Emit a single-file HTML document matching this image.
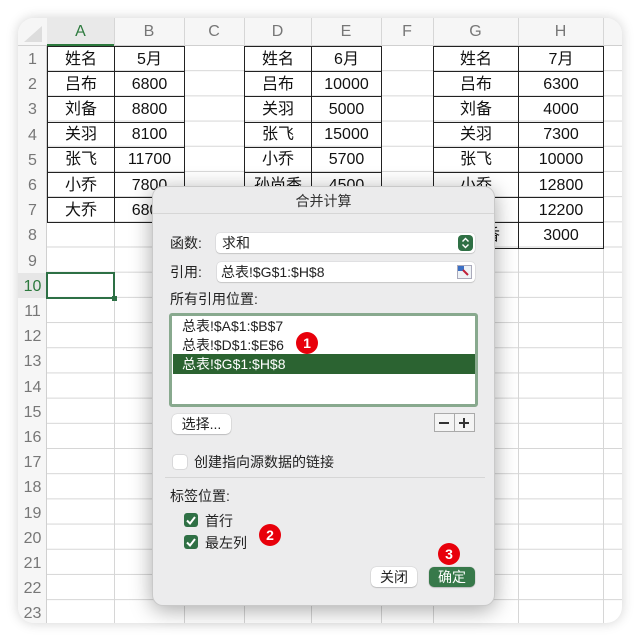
<!DOCTYPE html>
<html><head><meta charset="utf-8"><style>
*{margin:0;padding:0;box-sizing:border-box}
body{width:640px;height:642px;background:#fff;position:relative;overflow:hidden;font-family:"Liberation Sans","Noto Sans CJK SC",sans-serif}
.win{position:absolute;left:18px;top:18px;width:604px;height:605px;border-radius:16px;overflow:hidden;background:#fff;box-shadow:0 0 12px rgba(0,0,0,.18)}
.a{position:absolute}
.grid{position:absolute;left:29px;top:28px;width:580px;height:580px;
background-image:linear-gradient(#d6d6d6 1px,transparent 1px);background-size:100% 25.2px;background-position:0 -1px}
.vl{position:absolute;top:0;width:1px;height:605px;background:#d6d6d6}
.rh{position:absolute;left:0;width:29px;text-align:center;font-size:16px;color:#777;height:25.2px;line-height:28px}
.ch{position:absolute;top:0;height:28px;line-height:28px;text-align:center;font-size:16px;color:#777}
table{position:absolute;border-collapse:collapse;font-family:"Liberation Sans","Noto Sans CJK SC",sans-serif}
td{border:1px solid #222;height:25.2px;text-align:center;font-size:16px;color:#111;padding:0;line-height:23px}
.dlg{position:absolute;left:152px;top:186px;width:343px;height:420px;background:#ececed;border-radius:11px;box-shadow:0 4px 22px rgba(0,0,0,.35);border:1px solid #c9c9c9;font-size:14px;color:#222}
.t{position:absolute;white-space:nowrap}
.fld{position:absolute;background:#fff;border-radius:4px;box-shadow:0 0 1px rgba(0,0,0,.3),0 1px 1px rgba(0,0,0,.12)}
.badge{position:absolute;width:22px;height:22px;border-radius:50%;background:#e8000b;color:#fff;font-size:14px;font-weight:bold;text-align:center;line-height:22px}
.cb{position:absolute;width:14px;height:14px;border-radius:3px;background:#2f7045}
.btn{position:absolute;background:#fff;border-radius:5px;box-shadow:0 0 1px rgba(0,0,0,.35),0 1px 1px rgba(0,0,0,.15);text-align:center}
</style></head><body>
<div class="win">
 <div class="a" style="left:0;top:0;width:604px;height:28px;background:#f6f6f6;border-bottom:1px solid #d0d0d0"></div>
 <div class="a" style="left:0;top:28px;width:29px;height:580px;background:#f6f6f6;border-right:1px solid #d0d0d0"></div>
 <svg class="a" style="left:4px;top:6px" width="22" height="20"><polygon points="20,2 20,18 2,18" fill="#ddd"/></svg>
 <div class="grid"></div>
 <div class="vl" style="left:96px"></div><div class="vl" style="left:166px"></div><div class="vl" style="left:226px"></div><div class="vl" style="left:293px"></div><div class="vl" style="left:363px"></div><div class="vl" style="left:415px"></div><div class="vl" style="left:500px"></div><div class="vl" style="left:585px"></div>
 <div class="ch" style="left:29px;width:67px;color:#2d7a3e;border-bottom:2px solid #2d7a3e;background:#e9e9e9">A</div>
 <div class="ch" style="left:96px;width:70px">B</div><div class="ch" style="left:166px;width:60px">C</div><div class="ch" style="left:226px;width:67px">D</div><div class="ch" style="left:293px;width:70px">E</div><div class="ch" style="left:363px;width:52px">F</div><div class="ch" style="left:415px;width:85px">G</div><div class="ch" style="left:500px;width:85px">H</div>
 <div class="rh" style="top:28px">1</div><div class="rh" style="top:53.2px">2</div><div class="rh" style="top:78.4px">3</div><div class="rh" style="top:103.6px">4</div><div class="rh" style="top:128.8px">5</div><div class="rh" style="top:154px">6</div><div class="rh" style="top:179.2px">7</div><div class="rh" style="top:204.4px">8</div><div class="rh" style="top:229.6px">9</div><div class="rh" style="top:254.8px;color:#2d7a3e;background:#e6e6e6">10</div><div class="rh" style="top:280px">11</div><div class="rh" style="top:305.2px">12</div><div class="rh" style="top:330.4px">13</div><div class="rh" style="top:355.6px">14</div><div class="rh" style="top:380.8px">15</div><div class="rh" style="top:406px">16</div><div class="rh" style="top:431.2px">17</div><div class="rh" style="top:456.4px">18</div><div class="rh" style="top:481.6px">19</div><div class="rh" style="top:506.8px">20</div><div class="rh" style="top:532px">21</div><div class="rh" style="top:557.2px">22</div><div class="rh" style="top:582.4px">23</div>
 <table style="left:29px;top:28px"><colgroup><col style="width:67px"><col style="width:70px"></colgroup>
 <tr><td>姓名</td><td>5月</td></tr><tr><td>吕布</td><td>6800</td></tr><tr><td>刘备</td><td>8800</td></tr><tr><td>关羽</td><td>8100</td></tr><tr><td>张飞</td><td>11700</td></tr><tr><td>小乔</td><td>7800</td></tr><tr><td>大乔</td><td>6800</td></tr></table>
 <table style="left:226px;top:28px"><colgroup><col style="width:67px"><col style="width:70px"></colgroup>
 <tr><td>姓名</td><td>6月</td></tr><tr><td>吕布</td><td>10000</td></tr><tr><td>关羽</td><td>5000</td></tr><tr><td>张飞</td><td>15000</td></tr><tr><td>小乔</td><td>5700</td></tr><tr><td>孙尚香</td><td>4500</td></tr></table>
 <table style="left:415px;top:28px"><colgroup><col style="width:85px"><col style="width:85px"></colgroup>
 <tr><td>姓名</td><td>7月</td></tr><tr><td>吕布</td><td>6300</td></tr><tr><td>刘备</td><td>4000</td></tr><tr><td>关羽</td><td>7300</td></tr><tr><td>张飞</td><td>10000</td></tr><tr><td>小乔</td><td>12800</td></tr><tr><td>大乔</td><td>12200</td></tr><tr><td>孙尚香</td><td>3000</td></tr></table>
 <div class="a" style="left:28px;top:254px;width:69px;height:27px;border:2px solid #2d7045"></div>
 <div class="a" style="left:94px;top:278px;width:5px;height:5px;background:#2d7045"></div>
</div>
<div class="dlg">
 <div class="a" style="left:0;top:0;width:341px;height:27px;border-bottom:1px solid #d6d6d6;border-radius:11px 11px 0 0;background:#ebebec"></div>
 <div class="t" style="left:0;width:341px;text-align:center;top:4px;font-size:14px;color:#333">合并计算</div>
 <div class="t" style="left:17px;top:46px">函数:</div>
 <div class="fld" style="left:63px;top:46px;width:259px;height:20px"><span class="t" style="left:6px;top:0px">求和</span>
  <div class="a" style="left:242px;top:2px;width:15px;height:16px;border-radius:4px;background:#2f7045"><svg width="15" height="16"><path d="M4.5 6.5L7.5 3.5L10.5 6.5M4.5 9.5L7.5 12.5L10.5 9.5" stroke="#fff" stroke-width="1.4" fill="none"/></svg></div></div>
 <div class="t" style="left:17px;top:75px">引用:</div>
 <div class="fld" style="left:64px;top:75px;width:258px;height:20px"><span class="t" style="left:4px;top:0px">总表!$G$1:$H$8</span>
  <svg class="a" style="left:240px;top:3px" width="15" height="14"><rect x=".5" y=".5" width="14" height="13" fill="#eef2f6" stroke="#aab"/><rect x="1" y="1" width="6" height="5" fill="#3a6fc4"/><path d="M6 5l5 5" stroke="#c0203a" stroke-width="2"/></svg></div>
 <div class="t" style="left:17px;top:102px">所有引用位置:</div>
 <div class="a" style="left:16px;top:126px;width:309px;height:94px;border:3px solid #88a98e;border-radius:3px;background:#fff"></div>
 <div class="t" style="left:29px;top:129px">总表!$A$1:$B$7</div>
 <div class="t" style="left:29px;top:148px">总表!$D$1:$E$6</div>
 <div class="a" style="left:20px;top:167px;width:302px;height:20px;background:#2b6331"></div>
 <div class="t" style="left:29px;top:167px;color:#fff">总表!$G$1:$H$8</div>
 <div class="badge" style="left:143px;top:145px">1</div>
 <div class="btn" style="left:19px;top:227px;width:59px;height:20px;line-height:20px">选择...</div>
 <div class="a" style="left:281px;top:226px;width:41px;height:19px;border:1px solid #aaa;background:#f4f4f4"></div>
 <div class="a" style="left:301px;top:226px;width:1px;height:19px;background:#aaa"></div>
 <div class="a" style="left:286px;top:235px;width:10px;height:1.5px;background:#333"></div>
 <div class="a" style="left:306px;top:235px;width:10px;height:1.5px;background:#333"></div>
 <div class="a" style="left:310.3px;top:230.5px;width:1.5px;height:10px;background:#333"></div>
 <div class="a" style="left:20px;top:268px;width:14px;height:14px;border-radius:3px;background:#fff;box-shadow:0 0 1px rgba(0,0,0,.5)"></div>
 <div class="t" style="left:41px;top:265px">创建指向源数据的链接</div>
 <div class="a" style="left:12px;top:290px;width:320px;height:1px;background:#d6d6d6"></div>
 <div class="t" style="left:17px;top:299px">标签位置:</div>
 <div class="cb" style="left:31px;top:326px"><svg width="14" height="14"><path d="M3 7.5l3 3 5-6.5" stroke="#fff" stroke-width="2" fill="none"/></svg></div>
 <div class="t" style="left:52px;top:324px">首行</div>
 <div class="cb" style="left:31px;top:348px"><svg width="14" height="14"><path d="M3 7.5l3 3 5-6.5" stroke="#fff" stroke-width="2" fill="none"/></svg></div>
 <div class="t" style="left:52px;top:346px">最左列</div>
 <div class="badge" style="left:106px;top:337px">2</div>
 <div class="badge" style="left:285px;top:356px">3</div>
 <div class="btn" style="left:218px;top:380px;width:46px;height:20px;line-height:20px">关闭</div>
 <div class="btn" style="left:276px;top:380px;width:46px;height:20px;line-height:20px;background:#37794a;color:#fff">确定</div>
</div>
</body></html>
